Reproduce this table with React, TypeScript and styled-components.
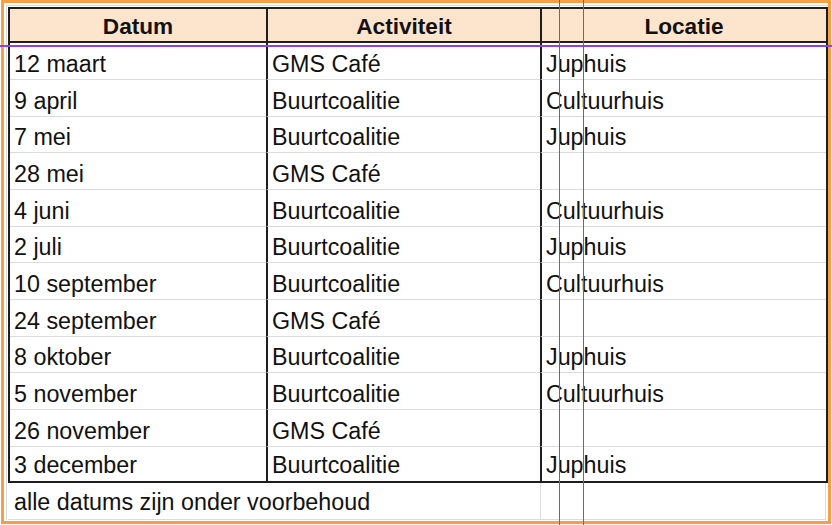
import React, { FC } from 'react';
import styled, { createGlobalStyle } from 'styled-components';

const GlobalStyle = createGlobalStyle`
  html,
  body {
    margin: 0;
    padding: 0;
    background: #ffffff;
  }

  body {
    font-family: 'Liberation Sans', Arial, sans-serif;
    color: #111111;
  }
`;

const colors = {
  orange: '#f4a047',
  purple: '#8a42ee',
  grid: '#dcdcdc',
  line: '#1e1e1e',
  header: '#fde4cc',
};

type Row = [string, string, string];

const rows: Row[] = [
  ['12 maart', 'GMS Café', 'Juphuis'],
  ['9 april', 'Buurtcoalitie', 'Cultuurhuis'],
  ['7 mei', 'Buurtcoalitie', 'Juphuis'],
  ['28 mei', 'GMS Café', ''],
  ['4 juni', 'Buurtcoalitie', 'Cultuurhuis'],
  ['2 juli', 'Buurtcoalitie', 'Juphuis'],
  ['10 september', 'Buurtcoalitie', 'Cultuurhuis'],
  ['24 september', 'GMS Café', ''],
  ['8 oktober', 'Buurtcoalitie', 'Juphuis'],
  ['5 november', 'Buurtcoalitie', 'Cultuurhuis'],
  ['26 november', 'GMS Café', ''],
  ['3 december', 'Buurtcoalitie', 'Juphuis'],
];

const headers = ['Datum', 'Activiteit', 'Locatie'];

const Page = styled.div`
  position: relative;
  width: 832px;
  height: 525px;
  overflow: hidden;
`;

const Frame = styled.div`
  box-sizing: border-box;
  width: 830px;
  height: 524px;
  margin-left: 1px;
  border: 3px solid ${colors.orange};
  background: #ffffff;
`;

const Sheet = styled.div`
  margin: 2px 0 0 2px;
  padding: 1px 0 0 1px;
  border-top: 1px solid ${colors.grid};
  border-left: 1px solid ${colors.grid};
`;

const Table = styled.div`
  display: grid;
  grid-template-columns: 256px 274px 286px;
  grid-template-rows: 34.33px repeat(12, 36.667px);
  width: 820px;
  box-sizing: border-box;
  border: 2px solid ${colors.line};
  border-bottom: none;
`;

const HeadCell = styled.div<{ $col: number }>`
  display: flex;
  align-items: flex-end;
  justify-content: center;
  box-sizing: border-box;
  padding: 0 4px 2px;
  background: ${colors.header};
  border-bottom: 2px solid ${colors.line};
  border-left: ${p => (p.$col > 0 ? `2px solid ${colors.line}` : 'none')};
  font-weight: bold;
  font-size: 22.6px;
  line-height: 24px;
`;

const Cell = styled.div<{ $col: number; $last: boolean }>`
  display: flex;
  align-items: flex-end;
  box-sizing: border-box;
  padding: 0 4px ${p => (p.$last ? 4 : 3)}px;
  border-bottom: ${p =>
    p.$last ? `2px solid ${colors.line}` : `1px solid ${colors.grid}`};
  border-left: ${p => (p.$col > 0 ? `2px solid ${colors.line}` : 'none')};
  font-size: 23.3px;
  line-height: 24px;
  white-space: nowrap;
`;

const Footer = styled.div`
  display: grid;
  grid-template-columns: 532px 286px;
  height: 36.667px;
  width: 820px;
`;

const Note = styled.div`
  display: flex;
  align-items: flex-end;
  box-sizing: border-box;
  padding: 0 6px 5px;
  border-bottom: 1px solid ${colors.grid};
  font-size: 23.3px;
  line-height: 24px;
  white-space: nowrap;
`;

const EmptyCell = styled.div`
  box-sizing: border-box;
  border-left: 1px solid ${colors.grid};
  border-right: 1px solid ${colors.grid};
  border-bottom: 1px solid ${colors.grid};
`;

const GuideH = styled.div<{ $top: number }>`
  position: absolute;
  left: 0;
  right: 0;
  top: ${p => p.$top}px;
  height: 2px;
  background: ${colors.purple};
`;

const GuideV = styled.div<{ $left: number }>`
  position: absolute;
  top: 0;
  bottom: 0;
  left: ${p => p.$left}px;
  width: 1px;
  background: ${colors.purple};
`;

const App: FC = () => (
  <>
    <GlobalStyle />
    <Page>
      <Frame>
        <Sheet>
          <Table>
            {headers.map((h, i) => (
              <HeadCell key={h} $col={i}>
                {h}
              </HeadCell>
            ))}
            {rows.map((row, r) =>
              row.map((value, c) => (
                <Cell key={`${r}-${c}`} $col={c} $last={r === rows.length - 1}>
                  {value}
                </Cell>
              ))
            )}
          </Table>
          <Footer>
            <Note>alle datums zijn onder voorbehoud</Note>
            <EmptyCell />
          </Footer>
        </Sheet>
      </Frame>
      <GuideH $top={45} />
      <GuideV $left={559} />
      <GuideV $left={583} />
    </Page>
  </>
);

export default App;
